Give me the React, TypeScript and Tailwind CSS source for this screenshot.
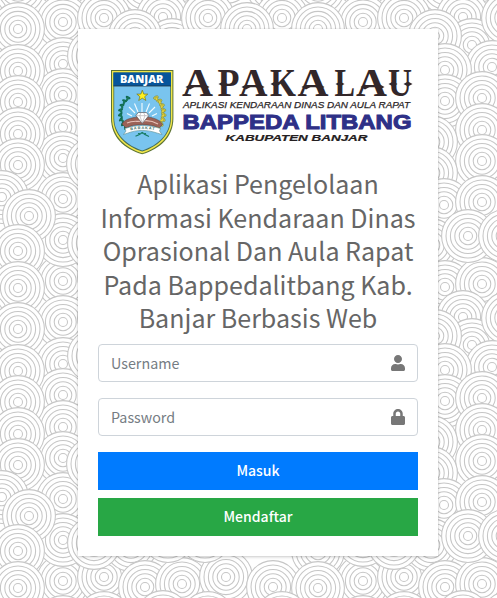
import React from "react";

const TILE = 300;
const RINGS = [26.4, 22, 17.6, 13.2, 8.8, 4.5];

// [x, y, stacking key, layer] of every rosette inside one 300px tile
const ROSETTES: [number, number, number, number][] = [
  [63, 22, 22, 0],
  [63, 64, 64, 0],
  [63, 95, 95, 0],
  [63, 127, 127, 0],
  [63, 158, 158, 0],
  [63, 199, 199, 0],
  [63, 240, 240, 0],
  [63, 281, 221, 0],
  [18, 29, 29, 1],
  [18, 71, 71, 1],
  [18, 102, 102, 1],
  [18, 134, 134, 1],
  [18, 165, 165, 1],
  [2, 197, 197, 1],
  [29, 216, 216, 1],
  [18, 251, 251, 1],
  [18, 288, 288, 1],
  [94, 56, 56, 1],
  [93, 164, 164, 1],
  [94, 243, 243, 1],
  [104, 18, 18, 1],
  [104, 277, 227, 1],
  [145, 287, 242, 1],
  [182, 284, 250, 1],
  [226, 277, 252, 1],
  [273, 287, 287, 1],
  [163, 17, 17, 1],
  [172, 45, 30, 1],
  [135, 36, 36, 1],
  [208, 18, 35, 1],
  [192, 67, 67, 1],
  [145, 70, 70, 1],
  [145, 101, 101, 1],
  [182, 98, 108, 1],
  [182, 130, 140, 1],
  [182, 161, 171, 1],
  [182, 202, 212, 1],
  [131, 142, 142, 1],
  [131, 173, 173, 1],
  [144, 205, 205, 1],
  [131, 245, 241, 1],
  [168, 236, 260, 1],
  [205, 236, 262, 1],
  [247, 29, 36, 1],
  [282, 18, 12, 1],
];

const placed = [-1, 0, 1, 2]
  .flatMap((row) =>
    [-1, 0, 1].flatMap((col) =>
      ROSETTES.map(([x, y, z, layer]) => ({
        x: x + col * TILE,
        y: y + row * TILE,
        z: layer * 10000 + row * TILE + z,
      })),
    ),
  )
  .filter((c) => c.x > -28 && c.x < 525 && c.y > -28 && c.y < 626)
  .sort((a, b) => a.z - b.z);

function Backdrop() {
  return (
    <svg className="absolute inset-0" width="497" height="598" aria-hidden="true">
      <g fill="#fff" stroke="#c6c6c6" strokeWidth="1.05">
        {placed.map((c, i) => (
          <g key={i}>
            {RINGS.map((r) => (
              <circle key={r} cx={c.x} cy={c.y} r={r} />
            ))}
          </g>
        ))}
      </g>
    </svg>
  );
}

const TITLE: [string, number, number][] = [
  ["A", 182, 31],
  ["P", 217.5, 22],
  ["A", 239, 28.5],
  ["K", 270, 26],
  ["A", 297.5, 31],
  ["L", 334.5, 20.5],
  ["A", 356, 31],
  ["U", 388, 24],
];

// Small spikes on the stems of the title letters
const THORNS: [number, number][] = [
  [190, 87], [205, 87], [223, 84], [246, 87], [260, 87], [275, 84],
  [306, 87], [320, 87], [340, 84], [365, 87], [380, 87], [393, 84], [408, 84],
];

const LEAVES: [number, number, number][] = [
  [129, 98, 60], [125.5, 101, 50], [123, 105, 30], [121.5, 109.5, 15],
  [121, 114, 0], [121.5, 118.5, -15], [123, 123, -30], [125.5, 126.5, -45],
];

function Crest() {
  return (
    <g>
      <path d="M111 70H173.4V118C173.4 137 160 149 142.2 154.3C124 149 111 137 111 118Z" fill="#5c7332" />
      <path d="M112 71H172.4V118C172.4 136 159 148 142.2 153.2C125 148 112 136 112 118Z" fill="#f1e64a" />
      <path d="M113.4 72.6H171V118C171 135 158 146.5 142.2 151.6C126 146.5 113.4 135 113.4 118Z" fill="#456d58" />
      <path d="M114.2 86H170.2V118C170.2 134.5 157.5 145.5 142.2 150.5C127 145.5 114.2 134.5 114.2 118Z" fill="#79c4ee" />
      <path d="M113.4 72.6H171V86H113.4Z" fill="#07559b" />
      <path d="M113.4 86H171" stroke="#1e343e" strokeWidth=".8" />
      <text x="120" y="82.9" textLength="43.5" lengthAdjust="spacingAndGlyphs" fill="#fff" fontSize="10.2" className="font-['Open_Sans'] font-extrabold">BANJAR</text>
      <g stroke="#f4fbff" strokeWidth="1.1">
        <path d="M142 112V103M138 112L134.5 103.5M146 112L149.5 103.5M135 113L129 107M149 113L155 107M132 116L127 113.5M152 116L157 113.5" />
      </g>
      <path d="M142.3 90.2L143.8 94.1H147.8L144.7 96.7L145.9 100.5L142.3 98.2L138.7 100.5L139.9 96.7L136.8 94.1H140.8Z" fill="#fff11f" stroke="#6f7421" strokeWidth=".7" />
      {LEAVES.map(([x, y, a], i) => (
        <g key={i}>
          <ellipse cx={x - 1} cy={y} rx="2.6" ry="1.3" transform={`rotate(${a - 35} ${x} ${y})`} fill="#116a50" />
          <ellipse cx={x + 1.6} cy={y + 1} rx="2.3" ry="1.2" transform={`rotate(${a + 55} ${x} ${y})`} fill="#17775a" />
          <ellipse cx={285 - x} cy={y} rx="2.6" ry="1.5" transform={`rotate(${35 - a} ${284 - x} ${y})`} fill="#ded849" stroke="#6b7c38" strokeWidth=".5" />
          <ellipse cx={282.4 - x} cy={y + 1} rx="2.3" ry="1.3" transform={`rotate(${-a - 55} ${284 - x} ${y})`} fill="#e4d339" stroke="#7b7c38" strokeWidth=".4" />
        </g>
      ))}
      <path d="M122 124C125 119 130 118.5 134 117.5C138 116 147 116 151 117.5C155 118.5 160 120 162.500 124.500L159 128C150 123.500 134 123.500 126 128Z" fill="#9b6257" stroke="#54403d" strokeWidth=".5" />
      <path d="M127 123C133 120 137 122 142 121S153 121 158 124" fill="none" stroke="#e5c0b7" strokeWidth="1.2" />
      <path d="M138.2 112.5H146.4L148.8 115.6L142.3 123.6L135.9 115.6Z" fill="#fff" stroke="#5e5d63" strokeWidth=".7" />
      <path d="M136 115.7H148.7M139.8 115.7L142.3 123L145 115.7L143.6 112.6M139.8 115.7L141 112.6" fill="none" stroke="#9a9298" strokeWidth=".5" />
      <path d="M123.5 134.5L126 131L124.8 128.6C136 124.5 149 124.5 160.5 128.6L159.5 131L162 134.5L157.5 133.2C147 129.5 137 129.5 127.5 133.2Z" fill="#fff" stroke="#5c8e92" strokeWidth=".6" />
      <path id="motto" d="M130.5 130.2Q142.5 127.8 155 130.4" fill="none" />
      <text fontSize="3.8" fill="#356656" className="font-['Liberation_Sans'] font-bold"><textPath href="#motto" textLength="24">BARAKAT</textPath></text>
      <path d="M135.5 136.3Q140 134.5 142.2 132.5Q145 135 149 136.5M138 133.5Q142 133 146 133.5" fill="none" stroke="#177b62" strokeWidth="1.2" />
    </g>
  );
}

function Logo() {
  return (
    <svg className="block h-[118px] w-80" viewBox="98 49 320 118" role="img">
      <Crest />
      <g fill="#32272a">
        {TITLE.map(([ch, x, w], i) => (
          <text key={i} x={x} y="96.4" textLength={w} lengthAdjust="spacingAndGlyphs" fontSize="39.5" className="font-['Liberation_Serif'] font-bold">
            {ch}
          </text>
        ))}
        {THORNS.map(([x, y], i) => (
          <path key={i} d={`M${x - 4.5} ${y}L${x} ${y - 2.6}L${x + 4.5} ${y}L${x} ${y + 2.6}Z`} />
        ))}
      </g>
      <text x="183" y="108.2" textLength="227" lengthAdjust="spacingAndGlyphs" fontSize="9.2" fill="#2b2628" stroke="#2b2628" strokeWidth=".25" className="font-['Liberation_Sans'] italic">
        APLIKASI KENDARAAN DINAS DAN AULA RAPAT
      </text>
      <text x="182.5" y="129.2" textLength="229" lengthAdjust="spacingAndGlyphs" fontSize="20.4" fill="#2e3087" stroke="#2e3087" strokeWidth="1" className="font-['Liberation_Sans'] font-bold">
        BAPPEDA LITBANG
      </text>
      <text x="225.5" y="141.3" textLength="142" lengthAdjust="spacingAndGlyphs" fontSize="9" fill="#242021" stroke="#242021" strokeWidth=".2" className="font-['Liberation_Sans'] font-bold italic">
        KABUPATEN BANJAR
      </text>
    </svg>
  );
}

function UserIcon() {
  return (
    <svg className="h-4 w-3.5" viewBox="0 0 448 512" fill="#777">
      <path d="M224 256c70.7 0 128-57.3 128-128S294.7 0 224 0 96 57.3 96 128s57.3 128 128 128zm89.600 32h-16.700c-22.200 10.200-46.900 16-72.900 16s-50.600-5.800-72.900-16h-16.700C60.200 288 0 348.200 0 422.400V464c0 26.500 21.500 48 48 48h352c26.500 0 48-21.500 48-48v-41.600c0-74.200-60.200-134.400-134.400-134.400z" />
    </svg>
  );
}

function LockIcon() {
  return (
    <svg className="h-4 w-3.5" viewBox="0 0 448 512" fill="#777">
      <path d="M400 224h-24v-72C376 68.200 307.800 0 224 0S72 68.200 72 152v72H48c-26.500 0-48 21.500-48 48v192c0 26.500 21.500 48 48 48h352c26.500 0 48-21.500 48-48V272c0-26.500-21.500-48-48-48zm-104 0H152v-72c0-39.700 32.300-72 72-72s72 32.300 72 72v72z" />
    </svg>
  );
}

function Field({ type, label, icon }: { type: string; label: string; icon: React.ReactNode }) {
  return (
    <div className="mb-4 flex h-[38px] items-center rounded border border-[#ced4da] bg-white px-3">
      <input
        type={type}
        placeholder={label}
        className="h-full min-w-0 flex-1 bg-transparent text-[14.3px] text-[#495057] outline-none placeholder:text-[#757c83]"
      />
      {icon}
    </div>
  );
}

export default function App() {
  return (
    <main className="relative flex h-[598px] w-[497px] items-start overflow-hidden bg-white pt-[29px] pl-[78px] font-['Noto_Sans_CJK_SC','Noto_Sans',sans-serif]">
      <Backdrop />
      <section className="relative h-[527px] w-[360px] bg-white px-5 pt-5 shadow-[0_0_1px_rgba(0,0,0,0.125),0_1px_3px_rgba(0,0,0,0.2)]">
        <Logo />
        <h3 className="mb-[9px] text-center text-[25.06px] leading-[33.6px] text-[#666]">
          Aplikasi Pengelolaan
          <br />
          Informasi Kendaraan Dinas
          <br />
          Oprasional Dan Aula Rapat
          <br />
          Pada Bappedalitbang Kab.
          <br />
          Banjar Berbasis Web
        </h3>
        <form>
          <Field type="text" label="Username" icon={<UserIcon />} />
          <Field type="password" label="Password" icon={<LockIcon />} />
          <button type="button" className="mb-2 block h-[38px] w-full bg-[#007bff] text-[14px] font-medium text-white">
            Masuk
          </button>
          <button type="button" className="block h-[38px] w-full bg-[#28a745] text-[14px] font-medium text-white">
            Mendaftar
          </button>
        </form>
      </section>
    </main>
  );
}
